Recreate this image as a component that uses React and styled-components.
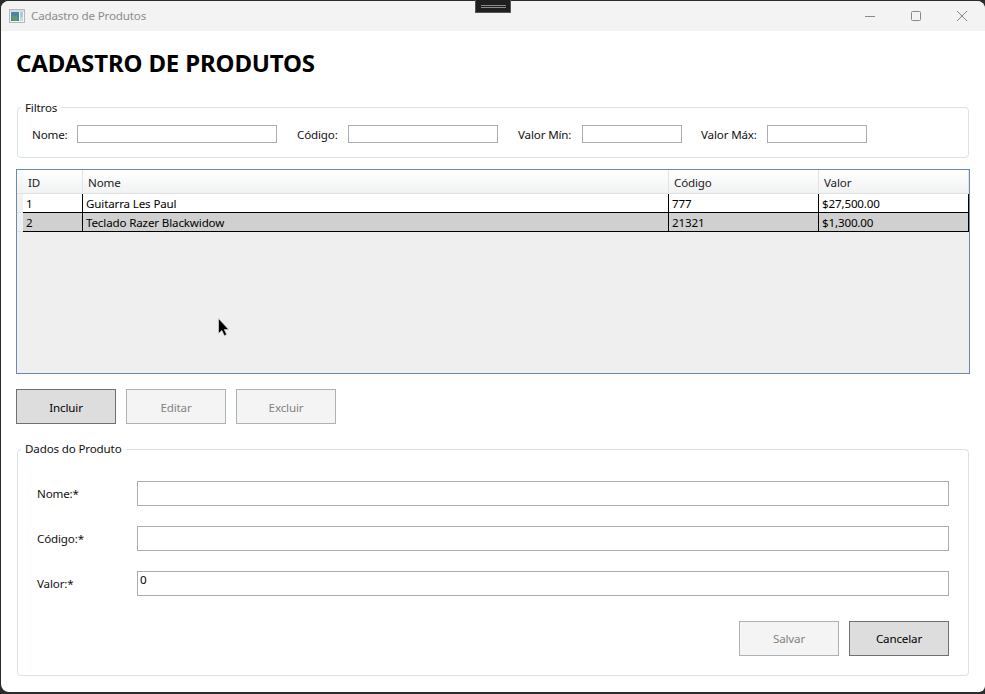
import styled, { createGlobalStyle } from 'styled-components'

const Global = createGlobalStyle`
html, body {
  margin: 0;
  padding: 0;
  background: #2b2b2b;
}
* {
  box-sizing: border-box;
}
body {
  font-family: "Noto Sans", "Open Sans", "Liberation Sans", sans-serif;
  font-size: 11.6px;
  letter-spacing: -0.15px;
  color: #111;
  overflow: hidden;
}
`

const Desktop = styled.div`
width: 985px;
height: 694px;
padding: 1px 0 2px 1px;
position: relative;
overflow: hidden;
`

const Window = styled.div`
width: 984px;
height: 691px;
background: #fff;
border-radius: 8px 8px 6px 8px;
overflow: hidden;
display: flex;
flex-direction: column;
`

const TitleBar = styled.div`
height: 30px;
flex: none;
background: #f3f3f3;
display: flex;
align-items: center;
padding-left: 8px;
color: #8c8c8c;
`

const TitleText = styled.span`
margin: -1px 0 0 6px;
flex: 1;
`

const WinButton = styled.button`
width: 46px;
height: 30px;
border: 0;
padding: 0;
background: none;
display: flex;
align-items: center;
justify-content: center;
color: #8a8a8a;
`

const DragHandle = styled.div`
position: absolute;
top: 0;
left: 475px;
width: 36px;
height: 13px;
background: #1f1f1f;
border: 1px solid #555;
border-top: 0;
display: flex;
flex-direction: column;
align-items: center;
justify-content: center;
gap: 1px;
& > i {
  display: block;
  width: 25px;
  height: 1px;
  background: #8a8a8a;
}
`

const Content = styled.div`
flex: 1;
padding: 0 15px 0 15px;
display: flex;
flex-direction: column;
`

const Heading = styled.h1`
margin: 16px 0 0 0;
height: 32px;
line-height: 32px;
font-size: 24px;
letter-spacing: -0.15px;
font-weight: 700;
color: #000;
`

const Group = styled.fieldset`
margin: ${p => p.$top}px 1px 0 1px;
padding: 0;
height: ${p => p.$height}px;
border: 1px solid #d9e2e6;
border-radius: 4px;
min-width: 0;
`

const Legend = styled.legend`
margin-left: 3px;
padding: 0 4px;
font-size: inherit;
line-height: 16px;
height: ${p => p.$height}px;
color: #111;
`

const FilterRow = styled.div`
display: flex;
align-items: center;
height: 18px;
margin: 11px 0 0 14px;
`

const FilterLabel = styled.label`
margin-left: ${p => p.$left || 0}px;
width: ${p => p.$width}px;
flex: none;
white-space: nowrap;
`

const FilterInput = styled.input`
width: ${p => p.$width}px;
height: 18px;
flex: none;
border: 1px solid #abadb3;
background: #fff;
padding: 0 2px;
font: inherit;
outline: none;
`

const Grid = styled.div`
margin-top: 11px;
height: 205px;
flex: none;
border: 1px solid #6d8aab;
background: #efefef;
`

const Row = styled.div`
display: grid;
grid-template-columns: 6px 60px 586px 150px 150px;
grid-template-rows: ${p => p.$height}px;
`

const HeaderCorner = styled.div`
background: linear-gradient(#fbfbfb, #f0f1f2);
border-bottom: 1px solid #e0e0e0;
`

const HeaderCell = styled.div`
background: linear-gradient(#ffffff, #f1f2f3);
border-right: 1px solid #e2e3e4;
border-bottom: 1px solid #e0e0e0;
padding: 2px 0 0 5px;
line-height: 21px;
color: #222;
`

const RowStrip = styled.div`
background: #f0f0f0;
border-bottom: 1px solid #e0e0e0;
`

const Cell = styled.div`
background: ${p => p.$selected ? '#d0d0d0' : '#fff'};
border-right: 1px solid #000;
border-bottom: 1px solid #000;
padding-left: 3px;
line-height: 19px;
color: #000;
`

const Actions = styled.div`
display: flex;
gap: 10px;
margin-top: 15px;
justify-content: ${p => p.$end ? 'flex-end' : 'flex-start'};
`

const ActionButton = styled.button`
width: 100px;
height: 35px;
font: inherit;
letter-spacing: inherit;
padding: ${p => p.$low ? 2 : 0}px 0 0 0;
background: ${p => p.disabled ? '#f4f4f4' : '#dddddd'};
border: 1px solid ${p => p.disabled ? '#adb2b5' : '#707070'};
color: ${p => p.disabled ? '#838383' : '#000'};
`

const FormRows = styled.div`
display: flex;
flex-direction: column;
gap: 20px;
padding: 24px 19px 0 19px;
`

const FormRow = styled.div`
display: flex;
align-items: center;
height: 25px;
`

const FormLabel = styled.label`
width: 100px;
flex: none;
`

const FormInput = styled.input`
flex: 1;
min-width: 0;
height: 25px;
border: 1px solid #abadb3;
background: #fff;
padding: 0 2px 8px 2px;
font: inherit;
letter-spacing: inherit;
outline: none;
color: #000;
`

const FormActions = styled(Actions)`
margin: 25px 19px 0 0;
`

const Pointer = styled.svg`
position: absolute;
left: 217px;
top: 318px;
`

const rows = [
  { id: '1', nome: 'Guitarra Les Paul', codigo: '777', valor: '$27,500.00' },
  { id: '2', nome: 'Teclado Razer Blackwidow', codigo: '21321', valor: '$1,300.00', selected: true },
]

export default function App() {
  return (
    <Desktop>
      <Global />
      <Window>
        <TitleBar>
          <svg width="16" height="15" viewBox="0 0 16 15">
            <rect x="0.5" y="0.5" width="15" height="13" fill="#f4f6f7" stroke="#b4b8ba" />
            <rect x="1" y="1" width="14" height="2" fill="#d8dcde" />
            <rect x="2" y="3" width="8" height="9" fill="#4a86a6" />
            <rect x="3" y="7" width="5" height="5" fill="#5f9a72" />
            <rect x="11" y="3" width="3" height="5" fill="#a9cbd8" />
            <rect x="11" y="8" width="3" height="4" fill="#c9dcc8" />
          </svg>
          <TitleText>Cadastro de Produtos</TitleText>
          <WinButton aria-label="Minimizar">
            <svg width="12" height="12" viewBox="0 0 12 12">
              <path d="M1 6.5h10" stroke="currentColor" fill="none" />
            </svg>
          </WinButton>
          <WinButton aria-label="Maximizar">
            <svg width="12" height="12" viewBox="0 0 12 12">
              <rect x="1.5" y="1.5" width="9" height="9" rx="1" stroke="currentColor" fill="none" />
            </svg>
          </WinButton>
          <WinButton aria-label="Fechar">
            <svg width="12" height="12" viewBox="0 0 12 12">
              <path d="M1 1l10 10M11 1L1 11" stroke="currentColor" fill="none" />
            </svg>
          </WinButton>
        </TitleBar>
        <Content>
          <Heading>CADASTRO DE PRODUTOS</Heading>
          <Group $top={21} $height={58}>
            <Legend $height={14}>Filtros</Legend>
            <FilterRow>
              <FilterLabel $width={45}>Nome:</FilterLabel>
              <FilterInput $width={200} />
              <FilterLabel $left={20} $width={51}>Código:</FilterLabel>
              <FilterInput $width={150} />
              <FilterLabel $left={20} $width={64}>Valor Mín:</FilterLabel>
              <FilterInput $width={100} />
              <FilterLabel $left={19} $width={66}>Valor Máx:</FilterLabel>
              <FilterInput $width={100} />
            </FilterRow>
          </Group>
          <Grid>
            <Row $height={24}>
              <HeaderCorner />
              <HeaderCell>ID</HeaderCell>
              <HeaderCell>Nome</HeaderCell>
              <HeaderCell>Código</HeaderCell>
              <HeaderCell>Valor</HeaderCell>
            </Row>
            {rows.map(r => (
              <Row $height={19} key={r.id}>
                <RowStrip />
                <Cell $selected={r.selected}>{r.id}</Cell>
                <Cell $selected={r.selected}>{r.nome}</Cell>
                <Cell $selected={r.selected}>{r.codigo}</Cell>
                <Cell $selected={r.selected}>{r.valor}</Cell>
              </Row>
            ))}
          </Grid>
          <Actions>
            <ActionButton $low>Incluir</ActionButton>
            <ActionButton $low disabled>Editar</ActionButton>
            <ActionButton $low disabled>Excluir</ActionButton>
          </Actions>
          <Group $top={17} $height={235}>
            <Legend $height={16}>Dados do Produto</Legend>
            <FormRows>
              <FormRow>
                <FormLabel>Nome:*</FormLabel>
                <FormInput />
              </FormRow>
              <FormRow>
                <FormLabel>Código:*</FormLabel>
                <FormInput />
              </FormRow>
              <FormRow>
                <FormLabel>Valor:*</FormLabel>
                <FormInput defaultValue="0" />
              </FormRow>
            </FormRows>
            <FormActions $end>
              <ActionButton disabled>Salvar</ActionButton>
              <ActionButton>Cancelar</ActionButton>
            </FormActions>
          </Group>
        </Content>
      </Window>
      <DragHandle><i /><i /></DragHandle>
      <Pointer width="14" height="20" viewBox="0 0 14 20">
        <path d="M1.5 0.5v15l3.4-3 2.4 5.2 2.4-1.1-2.4-5h4.4z" fill="#000" stroke="#d8d8d8" strokeWidth="0.7" />
      </Pointer>
    </Desktop>
  )
}
